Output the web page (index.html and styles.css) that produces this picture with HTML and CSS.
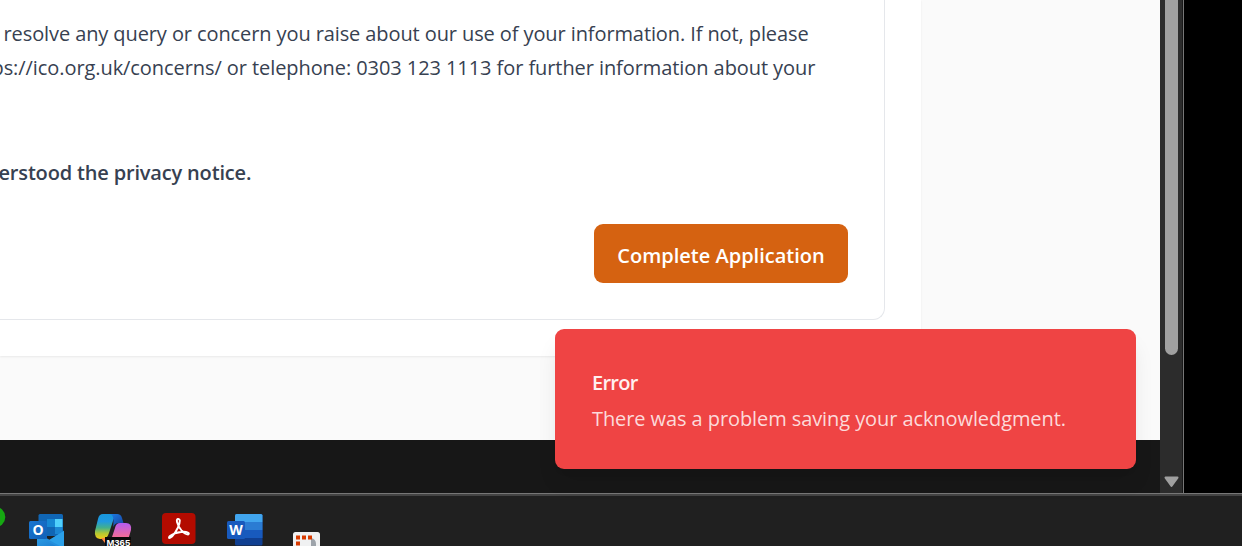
FILE: index.html
```html
<!DOCTYPE html>
<html lang="en">
<head>
<meta charset="utf-8">
<title>Privacy notice</title>
<link rel="stylesheet" href="styles.css">
</head>
<body>
<div class="desktop">
  <div class="window">
    <div class="page">
      <main class="panel">
        <section class="card">
          <p class="notice"><span class="line line-one">resolve any query or concern you raise about our use of your information. If not, please</span><span class="line line-two">ps://ico.org.uk/concerns/ or telephone: 0303 123 1113 for further information about your</span></p>
          <p class="consent"><span class="consent-text">erstood the privacy notice.</span></p>
          <div class="actions"><button class="submit"><span class="submit-text">Complete Application</span></button></div>
        </section>
      </main>
      <footer class="footer"></footer>
    </div>
    <div class="scrollbar">
      <div class="thumb"></div>
      <svg class="arrow" width="15" height="12" viewBox="0 0 15 12"><path d="M1.500 1.600H13.500L7.500 10Z" fill="#a0a0a0" stroke="#a0a0a0" stroke-width="2" stroke-linejoin="round"/></svg>
    </div>
    <div class="toast" role="alert">
      <div class="toast-title"><span>Error</span></div>
      <div class="toast-message"><span>There was a problem saving your acknowledgment.</span></div>
    </div>
  </div>
  <nav class="taskbar">
    <svg class="icons" width="340" height="50" viewBox="0 496 340 50">
      <defs>
        <linearGradient id="ribbon" x1="0" y1="0" x2="0" y2="1"><stop offset="0" stop-color="#1897dc"/><stop offset=".3" stop-color="#2099e0"/><stop offset=".55" stop-color="#43b08c"/><stop offset=".78" stop-color="#b5c832"/><stop offset="1" stop-color="#f2cb17"/></linearGradient>
        <linearGradient id="fold" x1="0" y1="0" x2="1" y2="1"><stop offset="0" stop-color="#1c7fe5"/><stop offset="1" stop-color="#173f9e"/></linearGradient>
        <linearGradient id="petal" x1="0" y1="0" x2="0" y2="1"><stop offset="0" stop-color="#b45cf0"/><stop offset="1" stop-color="#ff6f83"/></linearGradient>
        <linearGradient id="badge" x1="0" y1="0" x2="1" y2="1"><stop offset="0" stop-color="#1876d2"/><stop offset="1" stop-color="#1260b5"/></linearGradient>
        <linearGradient id="envelope" x1="0" y1="0" x2="1" y2="1"><stop offset="0" stop-color="#2d9ee6"/><stop offset="1" stop-color="#1d80d2"/></linearGradient>
      </defs>
      <circle cx="-5" cy="517" r="10.3" fill="#16a812"/>
      <g>
        <rect x="38.500" y="514" width="24.500" height="22" rx="1.500" fill="#1066b5"/>
        <path d="M47 519h8v8h-8z" fill="#1687d3"/><path d="M55 519h7.500v8H55z" fill="#50d0fb"/><path d="M47 527h8v7h-8z" fill="#1066b5"/><path d="M55 527h7.500v7H55z" fill="#1b86d3"/>
        <path d="M64 530.500V546H37V533L50 540Z" fill="#248fdd"/>
        <path d="M37 536L56 546H37Z" fill="url(#envelope)"/><path d="M64 531L49 540L60 546H64Z" fill="#2ba0e9"/>
        <rect x="29" y="521" width="18" height="18" rx="1.500" fill="url(#badge)"/>
        <text x="38" y="534.700" class="badge-letter">O</text>
      </g>
      <g>
        <path d="M103 514H118Q114 516 112 524L109 533Q107 539 103 539H100Q94 538 95 531L98 519Q99 514 103 514Z" fill="url(#ribbon)"/>
        <path d="M109 514H117Q121 514 122 518L123.500 523H119Q115 523 113 527Q115 514 109 514Z" fill="url(#fold)"/>
        <path d="M120 523H126Q132 523 131 530L128 540H111L115 528Q116 523 120 523Z" fill="url(#petal)"/>
        <path d="M101 538H107L105 543Z" fill="#ff843e"/>
        <rect x="105" y="537" width="26" height="9" fill="#090909"/>
        <text x="118.300" y="545.500" class="tag">M365</text>
      </g>
      <g>
        <rect x="162" y="513" width="33.500" height="31" rx="4" fill="#b30b00"/>
        <path d="M170 536C168 538 169 539 172 536.500C177 531 180 524 179.800 520.500C179.300 518 176.200 518.500 177 522C178.500 528 184 534.500 188 534.500C190.500 533.500 187.500 531.200 181 532C176.500 532.500 172 534.500 170 536Z" fill="none" stroke="#fff" stroke-width="1.900"/>
      </g>
      <g>
        <rect x="235" y="514" width="27.500" height="31.500" rx="1.500" fill="#103f91"/><path d="M235 522v-6.500q0-1.500 1.500-1.500h24.500q1.500 0 1.500 1.500V522z" fill="#41a5ee"/><path d="M235 522h27.500v8H235z" fill="#2b7cd3"/><path d="M235 530h27.500v8H235z" fill="#185abd"/>
        <rect x="227" y="521" width="18" height="18" rx="1.500" fill="#185abd"/>
        <text x="236" y="534.700" class="badge-letter">W</text>
      </g>
      <g>
        <rect x="293" y="532" width="27" height="18" rx="2.500" fill="#f0f1f2"/>
        <path d="M311 538q5 1 5 6v2h-5z" fill="#9da3aa"/>
        <path d="M296 535.500h4v4h-4zM302 535.500h4v4h-4zM308 535.500h4v4h-4zM296 541.500h4v4h-4z" fill="#d83b01"/>
      </g>
    </svg>
  </nav>
</div>
</body>
</html>
```
FILE: styles.css
```css
* { box-sizing: border-box; }
body { margin: 0; background: #000; overflow: hidden; font-family: "Open Sans", "Noto Sans", sans-serif; font-size: 20px; }
.desktop { width: 1242px; height: 546px; display: flex; flex-direction: column; overflow: hidden; }
.window { position: relative; display: flex; width: 1184px; height: 493px; border-right: 1px solid #777; }
.page { width: 1160px; display: flex; flex-direction: column; justify-content: space-between; background: #fafafa; overflow: hidden; }
.panel { width: 921px; height: 356px; padding-right: 36px; background: #fff; box-shadow: 0 1px 2px #00000012; }
.card { height: 320px; padding: 17px 36px 36px 0; display: flex; flex-direction: column; border: solid #e5e7eb; border-width: 0 1px 1px 0; border-bottom-right-radius: 12px; color: #374151; }
p { margin: 0; white-space: nowrap; }
.notice { line-height: 34px; }
.line { display: block; width: max-content; }
.line-one { margin-left: 3.5px; letter-spacing: -0.098px; }
.line-two { margin-left: -8.5px; letter-spacing: -0.075px; }
.consent { margin-top: 71px; line-height: 34px; font-weight: 600; letter-spacing: -0.17px; }
.consent-text { margin-left: -1.5px; }
.actions { display: flex; justify-content: flex-end; margin-top: 34px; }
.submit { flex: none; width: 254px; height: 59px; padding: 4px 0 0; border: 0; border-radius: 9px; background: #d56211; color: #fff; font: 600 20px "Open Sans", sans-serif; white-space: nowrap; }
.footer { height: 53px; background: #171717; }
.scrollbar { width: 23px; display: flex; flex-direction: column; align-items: center; justify-content: space-between; padding-bottom: 5px; background: #2c2c2c; border-right: 1px solid #191919; }
.thumb { width: 13px; height: 355px; border-radius: 0 0 7px 7px; background: #a0a0a0; }
.toast { position: absolute; left: 555px; top: 329px; width: 581px; height: 140px; padding: 36px 37px; border-radius: 9px; background: #ef4444; color: #fff; box-shadow: 0 15px 22px -4px #0000001a, 0 6px 9px -6px #0000001a; line-height: 36px; white-space: nowrap; }
.toast-title { font-weight: 600; color: #fff0f0; letter-spacing: -0.75px; }
.toast-message { color: #fcdada; letter-spacing: -0.085px; }
.taskbar { height: 53px; border-top: 1px solid #777; background: #202020; box-shadow: inset 0 2px #444; padding-top: 2px; }
.icons { display: block; }
.badge-letter { font: 700 14px "Open Sans", sans-serif; fill: #fff; text-anchor: middle; }
.tag { font: 700 9.5px "Liberation Sans", sans-serif; fill: #fff; text-anchor: middle; }
```
